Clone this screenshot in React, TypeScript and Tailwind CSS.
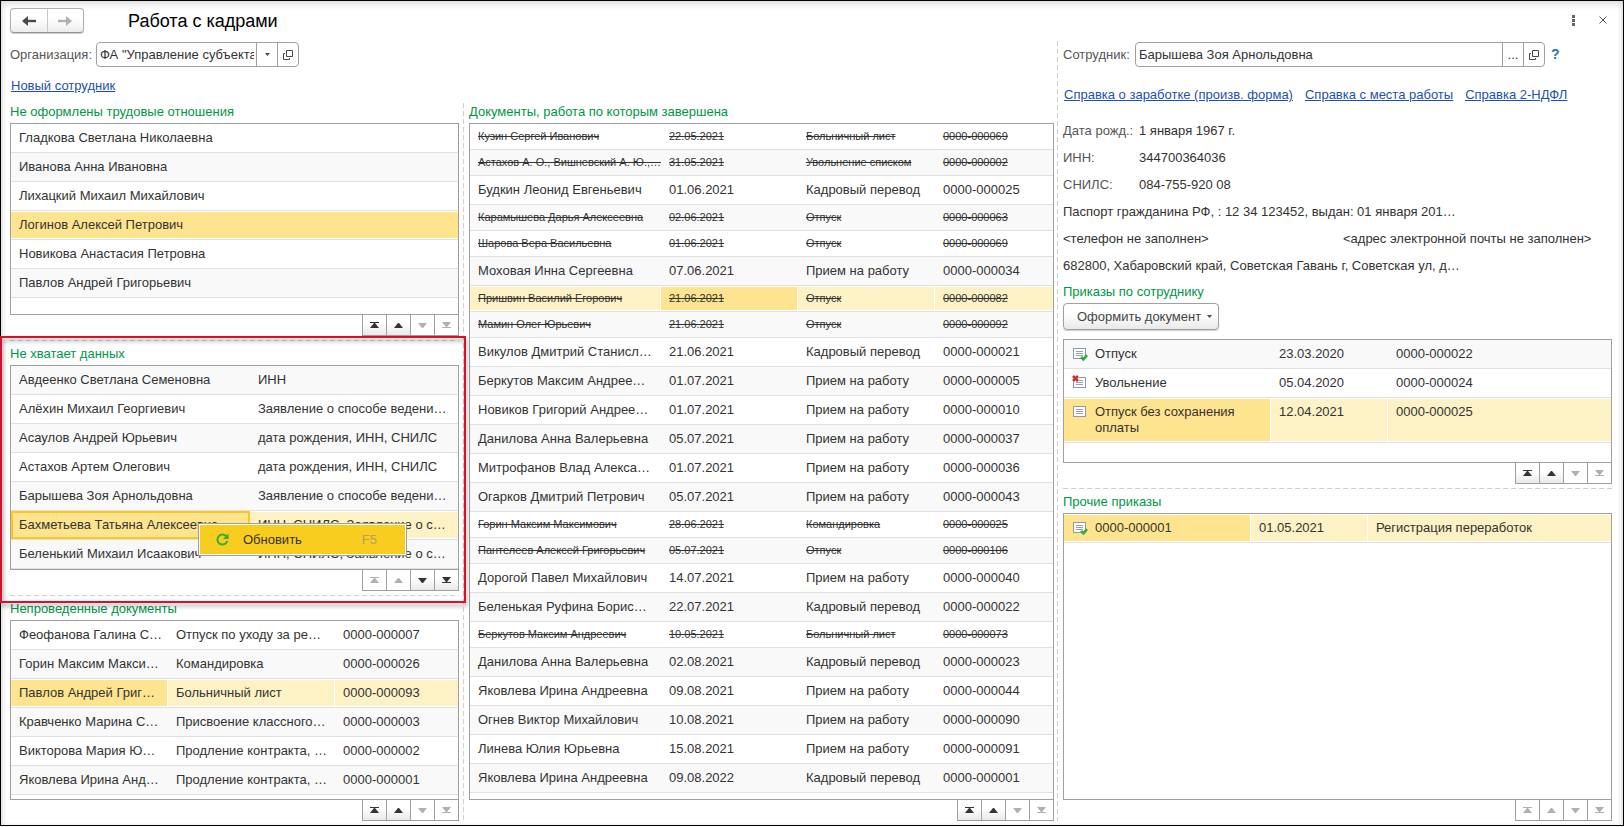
import type { ReactNode } from 'react'
import { clsx } from 'clsx'

type Row = {
  cells: string[]
  struck?: boolean
  icon?: 'posted' | 'deleted' | 'draft'
  // index of the cell that holds the cursor, if the row is selected
  current?: number
}

interface DataTableProps {
  label: string
  rows: Row[]
  columns: string[]
  firstShaded?: boolean
  focused?: boolean
}

const unregistered: Row[] = [
  { cells: ['Гладкова Светлана Николаевна'] },
  { cells: ['Иванова Анна Ивановна'] },
  { cells: ['Лихацкий Михаил Михайлович'] },
  { cells: ['Логинов Алексей Петрович'], current: 0 },
  { cells: ['Новикова Анастасия Петровна'] },
  { cells: ['Павлов Андрей Григорьевич'] },
]

const missingData: Row[] = [
  { cells: ['Авдеенко Светлана Семеновна', 'ИНН'] },
  { cells: ['Алёхин Михаил Георгиевич', 'Заявление о способе ведени…'] },
  { cells: ['Асаулов Андрей Юрьевич', 'дата рождения, ИНН, СНИЛС'] },
  { cells: ['Астахов Артем Олегович', 'дата рождения, ИНН, СНИЛС'] },
  { cells: ['Барышева Зоя Арнольдовна', 'Заявление о способе ведени…'] },
  { cells: ['Бахметьева Татьяна Алексеевна', 'ИНН, СНИЛС, Заявление о с…'], current: 0 },
  { cells: ['Беленький Михаил Исаакович', 'ИНН, СНИЛС, Заявление о с…'] },
]

const unposted: Row[] = [
  { cells: ['Феофанова Галина С…', 'Отпуск по уходу за ре…', '0000-000007'] },
  { cells: ['Горин Максим Макси…', 'Командировка', '0000-000026'] },
  { cells: ['Павлов Андрей Григ…', 'Больничный лист', '0000-000093'], current: 0 },
  { cells: ['Кравченко Марина С…', 'Присвоение классного…', '0000-000003'] },
  { cells: ['Викторова Мария Ю…', 'Продление контракта, …', '0000-000002'] },
  { cells: ['Яковлева Ирина Анд…', 'Продление контракта, …', '0000-000001'] },
]

const completed: Row[] = [
  { cells: ['Кузин Сергей Иванович', '22.05.2021', 'Больничный лист', '0000-000069'], struck: true },
  { cells: ['Астахов А. О., Вишневский А. Ю.,…', '31.05.2021', 'Увольнение списком', '0000-000002'], struck: true },
  { cells: ['Будкин Леонид Евгеньевич', '01.06.2021', 'Кадровый перевод', '0000-000025'] },
  { cells: ['Карамышева Дарья Алексеевна', '02.06.2021', 'Отпуск', '0000-000063'], struck: true },
  { cells: ['Шарова Вера Васильевна', '01.06.2021', 'Отпуск', '0000-000069'], struck: true },
  { cells: ['Моховая Инна Сергеевна', '07.06.2021', 'Прием на работу', '0000-000034'] },
  { cells: ['Пришвин Василий Егорович', '21.06.2021', 'Отпуск', '0000-000082'], struck: true, current: 1 },
  { cells: ['Мамин Олег Юрьевич', '21.06.2021', 'Отпуск', '0000-000092'], struck: true },
  { cells: ['Викулов Дмитрий Станисл…', '21.06.2021', 'Кадровый перевод', '0000-000021'] },
  { cells: ['Беркутов Максим Андрее…', '01.07.2021', 'Прием на работу', '0000-000005'] },
  { cells: ['Новиков Григорий Андрее…', '01.07.2021', 'Прием на работу', '0000-000010'] },
  { cells: ['Данилова Анна Валерьевна', '05.07.2021', 'Прием на работу', '0000-000037'] },
  { cells: ['Митрофанов Влад Алекса…', '01.07.2021', 'Прием на работу', '0000-000036'] },
  { cells: ['Огарков Дмитрий Петрович', '05.07.2021', 'Прием на работу', '0000-000043'] },
  { cells: ['Горин Максим Максимович', '28.06.2021', 'Командировка', '0000-000025'], struck: true },
  { cells: ['Пантелеев Алексей Григорьевич', '05.07.2021', 'Отпуск', '0000-000106'], struck: true },
  { cells: ['Дорогой Павел Михайлович', '14.07.2021', 'Прием на работу', '0000-000040'] },
  { cells: ['Беленькая Руфина Борис…', '22.07.2021', 'Кадровый перевод', '0000-000022'] },
  { cells: ['Беркутов Максим Андреевич', '10.05.2021', 'Больничный лист', '0000-000073'], struck: true },
  { cells: ['Данилова Анна Валерьевна', '02.08.2021', 'Кадровый перевод', '0000-000023'] },
  { cells: ['Яковлева Ирина Андреевна', '09.08.2021', 'Прием на работу', '0000-000044'] },
  { cells: ['Огнев Виктор Михайлович', '10.08.2021', 'Прием на работу', '0000-000090'] },
  { cells: ['Линева Юлия Юрьевна', '15.08.2021', 'Прием на работу', '0000-000091'] },
  { cells: ['Яковлева Ирина Андреевна', '09.08.2022', 'Кадровый перевод', '0000-000001'] },
]

const employeeOrders: Row[] = [
  { cells: ['Отпуск', '23.03.2020', '0000-000022'], icon: 'posted' },
  { cells: ['Увольнение', '05.04.2020', '0000-000024'], icon: 'deleted' },
  { cells: ['Отпуск без сохранения оплаты', '12.04.2021', '0000-000025'], icon: 'draft', current: 0 },
]

const otherOrders: Row[] = [
  { cells: ['0000-000001', '01.05.2021', 'Регистрация переработок'], icon: 'posted', current: 0 },
]

const personal = [
  { label: 'Дата рожд.:', value: '1 января 1967 г.' },
  { label: 'ИНН:', value: '344700364036' },
  { label: 'СНИЛС:', value: '084-755-920 08' },
]

function DocIcon({ kind }: { kind: 'posted' | 'deleted' | 'draft' }) {
  return (
    <svg width="17" height="15" viewBox="0 0 17 15" className="shrink-0" aria-hidden="true">
      <rect x="1.5" y="2.5" width="12" height="10" fill="#fff" stroke="#8f9aaa" />
      <path d="M4 5.5h7M4 7.5h7M4 9.5h7" stroke="#9aa1aa" />
      {kind === 'posted' && (
        <path d="M9 11l2.4 2.4L15 9.2" fill="none" stroke="#2fae3c" strokeWidth="2.6" />
      )}
      {kind === 'deleted' && (
        <>
          <path d="M0 0h7v7H0z" fill="#fff" />
          <path d="M1 1l5 5M6 1L1 6" stroke="#d9292f" strokeWidth="2.6" />
        </>
      )}
    </svg>
  )
}

function OpenIcon() {
  return (
    <svg width="10" height="10" viewBox="0 0 10 10" fill="none" stroke="#4a4a4a" aria-hidden="true">
      <path d="M3.5.5h6v6h-6z" />
      <path d="M2 3.5H.5v6h6V8" />
    </svg>
  )
}

function Caret() {
  return (
    <svg width="5" height="3" viewBox="0 0 5 3" fill="#4a4a4a" aria-hidden="true">
      <path d="M0 0h5L2.5 3z" />
    </svg>
  )
}

function DataTable({ label, rows, columns, firstShaded, focused }: DataTableProps) {
  return (
    <table aria-label={label} className="w-full table-fixed border-separate border-spacing-0">
      <colgroup>
        {columns.map((width, i) => (
          <col key={i} className={width} />
        ))}
      </colgroup>
      <tbody>
        {rows.map((row, r) => {
          const selected = row.current !== undefined
          const shaded = r % 2 === (firstShaded ? 0 : 1)
          return (
            <tr key={r} className={clsx(row.struck ? 'text-[11px] line-through' : 'text-[13px]')}>
              {row.cells.map((cell, c) => (
                <td
                  key={c}
                  className={clsx(
                    'overflow-hidden border-b border-[#e0e0e0] pl-2 align-top',
                    row.struck ? 'h-[26px] pt-1' : 'h-[29px] pt-1.5 pb-1.5',
                    row.icon ? 'whitespace-normal pr-6' : 'whitespace-nowrap',
                    !selected && shaded && 'bg-[#f9f9f9]',
                    selected && row.current === c && 'bg-[#ffe48f]',
                    selected && row.current !== c && 'bg-[#fdf1c6]',
                    selected && focused && row.current === c && 'shadow-[inset_0_0_0_2px_#f9c920]',
                    selected && !(focused && row.current === c) && 'shadow-[inset_0_1px_#fff,inset_0_-1px_#fff]',
                    selected && c < row.cells.length - 1 && !focused && 'border-r border-r-white',
                  )}
                >
                  {row.icon && c === 0 ? (
                    <span className="flex gap-1.5 leading-4">
                      <DocIcon kind={row.icon} />
                      <span>{cell}</span>
                    </span>
                  ) : (
                    <span className="block leading-4">{cell}</span>
                  )}
                </td>
              ))}
            </tr>
          )
        })}
      </tbody>
    </table>
  )
}

// "up" and "down" tell which of the scroll directions are available
function Scroller({ up, down }: { up?: boolean; down?: boolean }) {
  const buttons = [
    { label: 'В начало', on: up, path: 'M0 0h9v1H0zM4 1h1l4 5H0z' },
    { label: 'Вверх', on: up, path: 'M4 1h1l4 5H0z' },
    { label: 'Вниз', on: down, path: 'M0 1h9L5 6H4z' },
    { label: 'В конец', on: down, path: 'M0 0h9L5 5H4zM0 5h9v1H0z' },
  ]
  return (
    <div className="-mt-px flex shrink-0 justify-end">
      {buttons.map((b) => (
        <button
          key={b.label}
          type="button"
          aria-label={b.label}
          disabled={!b.on}
          className={clsx(
            '-ml-px flex h-[22px] w-[25px] items-center justify-center border border-[#a0a0a0]',
            b.on ? 'bg-linear-to-b from-white from-40% to-[#e9e9e9] text-[#333]' : 'bg-white text-[#b0b0b0]',
          )}
        >
          <svg width="9" height="6" viewBox="0 0 9 6" fill="currentColor" aria-hidden="true">
            <path d={b.path} />
          </svg>
        </button>
      ))}
    </div>
  )
}

function Heading({ children }: { children: ReactNode }) {
  return <h2 className="shrink-0 pb-0.5 leading-[18px] text-[#009646]">{children}</h2>
}

function Box({ className, children }: { className?: string; children: ReactNode }) {
  return <div className={clsx('border border-[#a0a0a0] bg-white', className)}>{children}</div>
}

function RuleX() {
  return (
    <div className="my-1 h-px shrink-0 bg-[repeating-linear-gradient(90deg,#cfcfcf_0_5px,transparent_5px_8px)]" />
  )
}

function RuleY() {
  return <div className="bg-[repeating-linear-gradient(180deg,#cfcfcf_0_5px,transparent_5px_8px)]" />
}

function ContextMenu() {
  return (
    <div role="menu" className="absolute top-[158px] left-[188px] w-[209px] border border-[#a0a0a0] bg-white p-px">
      <button
        type="button"
        role="menuitem"
        className="flex h-[29px] w-full items-center bg-[#f9cc20] pr-7 pl-4 text-left"
      >
        <svg width="13" height="13" viewBox="0 0 13 13" fill="none" aria-hidden="true">
          <path d="M10.6 3.6A5 5 0 1 0 11.3 8" stroke="#3aaa35" strokeWidth="2" />
          <path d="M12.5.5v5.5H7z" fill="#3aaa35" />
        </svg>
        <span className="ml-3.5 flex-1">Обновить</span>
        <span className="text-[#b3a262]">F5</span>
      </button>
    </div>
  )
}

function TitleBar() {
  return (
    <header className="flex h-[41px] shrink-0 items-start pt-[7px] pr-2 pl-[9px]">
      <div className="flex h-[25px] w-[74px] rounded-sm border border-[#b0b0b0] border-b-[#929292] bg-linear-to-b from-white from-40% to-[#ececec] shadow-[0_1px_1px_#ccc]">
        <button type="button" aria-label="Назад" className="flex flex-1 items-center justify-center border-r border-[#c8c8c8] text-[#4a4a4a]">
          <svg width="14" height="10" viewBox="0 0 14 10" fill="none" stroke="currentColor" aria-hidden="true">
            <path d="M14 5H4" strokeWidth="2.4" />
            <path d="M6 0v10L0 5z" fill="currentColor" stroke="none" />
          </svg>
        </button>
        <button type="button" aria-label="Вперед" disabled className="flex flex-1 items-center justify-center text-[#b0b0b0]">
          <svg width="14" height="10" viewBox="0 0 14 10" fill="none" stroke="currentColor" aria-hidden="true">
            <path d="M0 5h10" strokeWidth="2.4" />
            <path d="M8 0v10l6-5z" fill="currentColor" stroke="none" />
          </svg>
        </button>
      </div>
      <h1 className="ml-11 flex-1 text-[18px] leading-[26px] text-black">Работа с кадрами</h1>
      <button type="button" aria-label="Ещё" className="flex h-6 w-6 items-center justify-center">
        <svg width="3" height="11" viewBox="0 0 3 11" fill="#666" aria-hidden="true">
          <path d="M0 0h3v3H0zM0 4h3v3H0zM0 8h3v3H0z" />
        </svg>
      </button>
      <button type="button" aria-label="Закрыть" className="ml-1.5 flex h-6 w-6 items-center justify-center">
        <svg width="8" height="8" viewBox="0 0 8 8" stroke="#555" aria-hidden="true">
          <path d="M.5.5l7 7M7.5.5l-7 7" />
        </svg>
      </button>
    </header>
  )
}

function EmployeePanel() {
  return (
    <aside className="flex min-w-0 flex-col pt-px pr-[11px] pl-[5px]">
      <div className="flex h-[25px] shrink-0 items-center">
        <label htmlFor="employee" className="w-[72px] text-[#555]">Сотрудник:</label>
        <div className="flex h-full w-[410px] rounded border border-[#a0a0a0] bg-white">
          <input id="employee" defaultValue="Барышева Зоя Арнольдовна" className="min-w-0 flex-1 px-[3px] outline-none" />
          <button type="button" aria-label="Выбрать" className="w-[21px] border-l border-[#a0a0a0]">...</button>
          <button type="button" aria-label="Открыть" className="flex w-[21px] items-center justify-center border-l border-[#a0a0a0]">
            <OpenIcon />
          </button>
        </div>
        <a href="#help" className="ml-1.5 text-[14px] font-bold text-[#1b76bc]">?</a>
      </div>

      <nav className="mt-[18px] flex gap-3 pl-px leading-5 whitespace-nowrap text-[#1d4fb8] underline">
        <a href="#salary">Справка о заработке (произв. форма)</a>
        <a href="#workplace">Справка с места работы</a>
        <a href="#ndfl">Справка 2-НДФЛ</a>
      </nav>

      <div className="mt-3 mb-1 leading-[27px]">
        {personal.map((p) => (
          <div key={p.label} className="flex">
            <span className="w-[76px] text-[#555]">{p.label}</span>
            <span>{p.value}</span>
          </div>
        ))}
        <p>Паспорт гражданина РФ, : 12 34 123452, выдан: 01 января 201…</p>
        <div className="flex">
          <span className="w-[51%]">&lt;телефон не заполнен&gt;</span>
          <span className="whitespace-nowrap">&lt;адрес электронной почты не заполнен&gt;</span>
        </div>
        <p>682800, Хабаровский край, Советская Гавань г, Советская ул, д…</p>
      </div>

      <Heading>Приказы по сотруднику</Heading>
      <button
        type="button"
        className="flex h-[27px] shrink-0 items-center gap-1.5 self-start rounded-sm border border-[#a0a0a0] bg-linear-to-b from-white from-40% to-[#e9e9e9] pr-1.5 pl-[13px] text-[#444] shadow-[0_1px_1px_#ccc]"
      >
        Оформить документ
        <Caret />
      </button>
      <Box className="mt-[9px] h-31 shrink-0">
        <DataTable label="Приказы по сотруднику" rows={employeeOrders} columns={['w-[207px]', 'w-[117px]', 'w-auto']} firstShaded />
      </Box>
      <Scroller up />
      <RuleX />
      <Heading>Прочие приказы</Heading>
      <Box className="flex-1">
        <DataTable label="Прочие приказы" rows={otherOrders} columns={['w-[187px]', 'w-[117px]', 'w-auto']} />
      </Box>
      <Scroller />
    </aside>
  )
}

export default function App() {
  return (
    <div className="flex min-h-screen flex-col bg-white pb-px font-['Liberation_Sans',Arial,sans-serif] text-[13px] text-[#333]">
      <div className="flex flex-1 flex-col border border-black pb-1 shadow-[inset_0_4px_8px_-2px_#d8d4d8,inset_3px_0_5px_-2px_#e4e4e4,inset_-3px_0_5px_-2px_#e4e4e4]">
        <TitleBar />
        <main className="-mt-px grid flex-1 grid-cols-[1056fr_1px_565fr]">
          <div className="flex min-w-0 flex-col pt-px">
            <div className="flex h-[25px] items-center pl-[9px]">
              <label htmlFor="organization" className="w-[86px] text-[#555]">Организация:</label>
              <div className="flex h-full w-[203px] rounded border border-[#a0a0a0] bg-white">
                <input id="organization" defaultValue={'ФА "Управление субъектами"'} className="mr-0.5 min-w-0 flex-1 pl-[3px] outline-none" />
                <button type="button" aria-label="Выбрать" className="flex w-[21px] items-center justify-center border-l border-[#a0a0a0]">
                  <Caret />
                </button>
                <button type="button" aria-label="Открыть" className="flex w-[21px] items-center justify-center border-l border-[#a0a0a0]">
                  <OpenIcon />
                </button>
              </div>
            </div>
            <div className="mt-2 mb-1.5 pl-2.5 leading-[22px]">
              <a href="#new" className="text-[#1d4fb8] underline">Новый сотрудник</a>
            </div>

            <div className="grid flex-1 grid-cols-[462fr_1px_593fr]">
              <div className="flex min-w-0 flex-col pr-1 pl-[9px]">
                <Heading>Не оформлены трудовые отношения</Heading>
                <Box className="h-48 shrink-0">
                  <DataTable label="Не оформлены трудовые отношения" rows={unregistered} columns={['w-full']} />
                </Box>
                <Scroller up />

                <section className="relative flex flex-col">
                  <RuleX />
                  <Heading>Не хватает данных</Heading>
                  <div className="relative">
                    <Box>
                      <DataTable label="Не хватает данных" rows={missingData} columns={['w-[239px]', 'w-auto']} firstShaded focused />
                    </Box>
                    <ContextMenu />
                  </div>
                  <Scroller down />
                  <RuleX />
                  <div className="pointer-events-none absolute top-0 -right-[7px] -bottom-[3px] -left-2.5 border-2 border-[#d8102c] drop-shadow-[1px_3px_2px_rgba(0,0,0,0.4)]" />
                </section>

                <Heading>Непроведенные документы</Heading>
                <Box className="flex-1">
                  <DataTable label="Непроведенные документы" rows={unposted} columns={['w-[157px]', 'w-[167px]', 'w-auto']} />
                </Box>
                <Scroller up />
              </div>
              <RuleY />
              <div className="flex min-w-0 flex-col pr-[3px] pl-[5px]">
                <Heading>Документы, работа по которым завершена</Heading>
                <Box className="flex-1">
                  <DataTable
                    label="Документы, работа по которым завершена"
                    rows={completed}
                    columns={['w-[191px]', 'w-[137px]', 'w-[137px]', 'w-auto']}
                  />
                </Box>
                <Scroller up />
              </div>
            </div>
          </div>
          <RuleY />
          <EmployeePanel />
        </main>
      </div>
    </div>
  )
}
